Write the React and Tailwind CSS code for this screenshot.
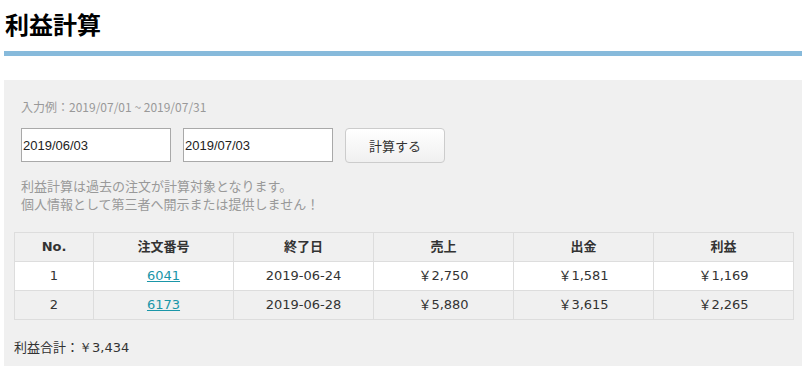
const rows = [
  { no: 1, order: '6041', end: '2019-06-24', sales: '￥2,750', paid: '￥1,581', profit: '￥1,169' },
  { no: 2, order: '6173', end: '2019-06-28', sales: '￥5,880', paid: '￥3,615', profit: '￥2,265' },
]

const heads = ['No.', '注文番号', '終了日', '売上', '出金', '利益']

const cell = 'border border-[#dddddd] h-[29px] text-center align-middle'

export default function App() {
  return (
    <div className="w-[802px] h-[372px] bg-white text-[#333333] overflow-hidden" style={{ fontFamily: '"Noto Sans CJK JP", sans-serif' }}>
      <h1 className="pl-[5px] pt-[8px] text-[24px] leading-[32px] font-bold text-black">利益計算</h1>
      <div className="ml-[4px] mt-[11px] h-[5px] bg-[#87badb]" />

      <div className="ml-[4px] mt-[24px] bg-[#f0f0f0] px-[10px] pt-[18px] h-[286px]">
        <div className="pl-[7px]">
          <p className="h-[18px] text-[12px] leading-[18px] text-[#999999]">入力例：2019/07/01 ~ 2019/07/31</p>

          <div className="mt-[12px] flex gap-[12px]">
            <input
              defaultValue="2019/06/03"
              className="w-[150px] h-[34px] border border-[#a9a9a9] bg-white px-[1px] text-[13px] text-[#222222] outline-none"
              style={{ fontFamily: '"Liberation Sans", sans-serif' }}
            />
            <input
              defaultValue="2019/07/03"
              className="w-[150px] h-[34px] border border-[#a9a9a9] bg-white px-[1px] text-[13px] text-[#222222] outline-none"
              style={{ fontFamily: '"Liberation Sans", sans-serif' }}
            />
            <button className="w-[100px] h-[35px] rounded-[4px] border border-[#cccccc] bg-gradient-to-b from-white to-[#f0f0f0] text-[13px] text-[#333333]">
              計算する
            </button>
          </div>

          <div className="mt-[14px] text-[13px] leading-[18px] text-[#999999]">
            <p>利益計算は過去の注文が計算対象となります。</p>
            <p>個人情報として第三者へ開示または提供しません！</p>
          </div>
        </div>

        <table className="mt-[19px] w-[780px] border-collapse text-[13px]" style={{ fontFamily: '"DejaVu Sans", "Noto Sans CJK JP", sans-serif' }}>
          <thead>
            <tr className="bg-[#f0f0f0]">
              {heads.map((h, i) => (
                <th key={h} className={`${cell} font-bold ${i === 0 ? 'w-[79px]' : 'w-[140px]'}`}>{h}</th>
              ))}
            </tr>
          </thead>
          <tbody>
            {rows.map((r, i) => (
              <tr key={r.no} className={i % 2 === 0 ? 'bg-white' : 'bg-[#f0f0f0]'}>
                <td className={cell}>{r.no}</td>
                <td className={cell}>
                  <a href="#" className="text-[#1a96a8] underline">{r.order}</a>
                </td>
                <td className={cell}>{r.end}</td>
                <td className={cell}>{r.sales}</td>
                <td className={cell}>{r.paid}</td>
                <td className={cell}>{r.profit}</td>
              </tr>
            ))}
          </tbody>
        </table>

        <p className="mt-[18px] text-[13px] leading-[18px]">
          利益合計：<span style={{ fontFamily: '"DejaVu Sans", sans-serif' }}>￥3,434</span>
        </p>
      </div>
    </div>
  )
}
